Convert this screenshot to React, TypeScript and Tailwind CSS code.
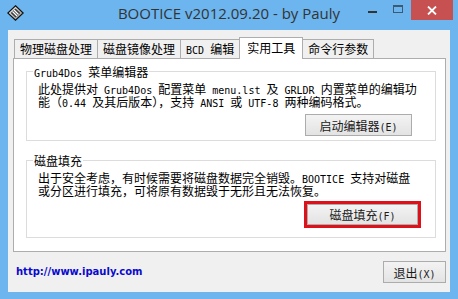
import React from "react";

function T({ s }: { s: string }) {
  const parts = s.split(/([\x20-\x7e]+)/).filter((p) => p.length > 0);
  return (
    <>
      {parts.map((p, i) =>
        /^[\x20-\x7e]+$/.test(p) ? (
          <span key={i} className="font-['DejaVu_Sans_Mono',monospace] text-[10px] leading-[0px] whitespace-pre">
            {p}
          </span>
        ) : (
          <span key={i}>{p}</span>
        )
      )}
    </>
  );
}

function Btn({ label, className }: { label: string; className: string }) {
  return (
    <div
      className={
        "flex items-center justify-center border border-[#acacac] bg-linear-to-b from-[#f3f3f3] to-[#e3e3e3] leading-[13px] text-[#1a1a1a] " +
        className
      }
    >
      <span className="h-[13px] leading-[13px] whitespace-nowrap">
        <T s={label} />
      </span>
    </div>
  );
}

function Tab({ label, sel, first }: { label: string; sel?: boolean; first?: boolean }) {
  if (sel) {
    return (
      <div className="relative z-10 -ml-[1px] -mb-[1px] h-[22px] border border-b-0 border-[#adadad] bg-white px-[7px] leading-[19px] whitespace-nowrap">
        <T s={label} />
      </div>
    );
  }
  return (
    <div
      className={
        "h-[19px] border border-b-0 border-[#adadad] bg-[#f0f0f0] px-[5px] leading-[17px] whitespace-nowrap " +
        (first ? "" : "-ml-[1px]")
      }
    >
      <T s={label} />
    </div>
  );
}

function Line({ s }: { s: string }) {
  return (
    <div className="h-[13px] leading-[13px] whitespace-nowrap">
      <T s={s} />
    </div>
  );
}

export default function App() {
  return (
    <div className="w-[458px] h-[299px] bg-[#6cb5ee] flex flex-col overflow-hidden font-['Noto_Sans_CJK_SC',sans-serif] text-[12px] text-black">
      {/* title bar */}
      <div className="h-[30px] grid grid-cols-[1fr_auto_1fr] shrink-0">
        <div className="flex items-start pl-[7px] pt-[5px]">
          <svg width="17" height="16" viewBox="0 0 17 16">
            <defs>
              <linearGradient id="dg" x1="0" y1="0" x2="1" y2="1">
                <stop offset="0" stopColor="#ffffff" />
                <stop offset="1" stopColor="#8a8a8a" />
              </linearGradient>
            </defs>
            <polygon points="8.5,0.8 16.2,8 8.5,15.2 0.8,8" fill="url(#dg)" stroke="#111" strokeWidth="1.2" />
            <polygon points="8.5,3.5 13.3,8 8.5,12.5 3.7,8" fill="#3c3c3c" />
            <line x1="5.5" y1="6.5" x2="10" y2="11" stroke="#fff" strokeWidth="1.2" />
            <line x1="7" y1="5" x2="11.5" y2="9.5" stroke="#fff" strokeWidth="1.2" />
          </svg>
        </div>
        <div className="pt-[3px] font-['Open_Sans',sans-serif] text-[15px] leading-[20px] text-[#333] whitespace-nowrap">
          BOOTICE v2012.09.20 - by Pauly
        </div>
        <div className="flex justify-end items-start pr-[5px]">
          <div className="w-[26px] h-[20px] flex items-center justify-center">
            <div className="w-[9px] h-[2px] bg-[#333] mt-[4px]" />
          </div>
          <div className="w-[26px] h-[20px] flex items-center justify-center">
            <div className="w-[10px] h-[8px] border border-[#3d5a75] border-t-2 -mt-[2px]" />
          </div>
          <div className="w-[42px] h-[20px] bg-[#c75050] flex items-center justify-center">
            <svg width="10" height="9" viewBox="0 0 10 9">
              <path d="M1 0.5 L9 8.5 M9 0.5 L1 8.5" stroke="#fff" strokeWidth="1.8" />
            </svg>
          </div>
        </div>
      </div>

      {/* client area */}
      <div className="mx-[8px] h-[262px] bg-[#f0f0f0] pl-[5px] pr-[4px] pt-[7px] flex flex-col shrink-0">
        {/* tabs */}
        <div className="h-[21px] flex items-end pl-[1px]">
          <Tab label="物理磁盘处理" first />
          <Tab label="磁盘镜像处理" />
          <Tab label="BCD 编辑" />
          <Tab label="实用工具" sel />
          <Tab label="命令行参数" />
        </div>
        {/* panel */}
        <div className="h-[194px] w-[433px] border border-[#adadad] bg-white pl-[12px] pr-[9px] pt-[6px]">
          <fieldset className="border border-[#dcdcdc] px-[6px] pb-[4px]">
            <legend className="px-[1px] h-[13px] leading-[13px] whitespace-nowrap">
              <T s="Grub4Dos 菜单编辑器" />
            </legend>
            <div className="mt-[4px] pl-[5px]">
              <Line s="此处提供对 Grub4Dos 配置菜单 menu.lst 及 GRLDR 内置菜单的编辑功" />
              <Line s="能（0.44 及其后版本），支持 ANSI 或 UTF-8 两种编码格式。" />
            </div>
            <div className="mt-[6px] flex justify-end pr-[17px]">
              <Btn label="启动编辑器(E)" className="w-[107px] h-[22px]" />
            </div>
          </fieldset>
          <fieldset className="mt-[13px] border border-[#dcdcdc] px-[6px] pb-[9px]">
            <legend className="px-[1px] h-[13px] leading-[13px] whitespace-nowrap">磁盘填充</legend>
            <div className="mt-[4px] pl-[5px]">
              <Line s="出于安全考虑，有时候需要将磁盘数据完全销毁。BOOTICE 支持对磁盘" />
              <Line s="或分区进行填充，可将原有数据毁于无形且无法恢复。" />
            </div>
            <div className="mt-[4px] flex justify-end pr-[8px]">
              <div className="border-[3px] border-[#e0101a] bg-white">
                <Btn label="磁盘填充(F)" className="w-[111px] h-[21px]" />
              </div>
            </div>
          </fieldset>
        </div>
        {/* footer */}
        <div className="mt-[9px] flex items-center justify-between pl-[3px] w-[433px]">
          <span className="font-['DejaVu_Sans',sans-serif] font-bold text-[10px] leading-[12px] text-[#0a0acc]">
            http://www.ipauly.com
          </span>
          <Btn label="退出(X)" className="w-[63px] h-[22px]" />
        </div>
      </div>
    </div>
  );
}
